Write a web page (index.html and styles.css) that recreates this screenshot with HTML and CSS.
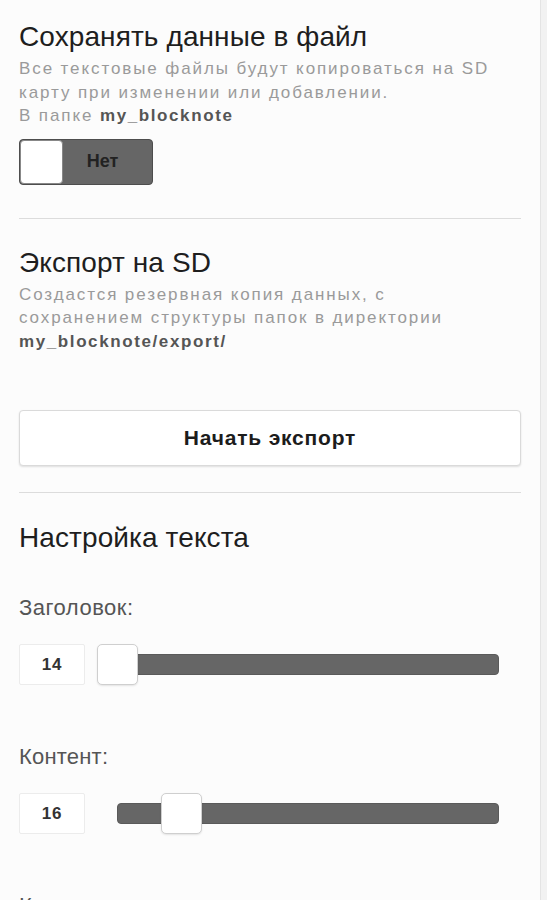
FILE: index.html
```html
<!DOCTYPE html>
<html lang="ru">
<head>
<meta charset="utf-8">
<title>Настройки</title>
<link rel="stylesheet" href="styles.css">
</head>
<body>
<div class="page">
  <section class="section first">
    <h2 class="title">Сохранять данные в файл</h2>
    <p class="desc">Все текстовые файлы будут копироваться на SD<br>карту при изменении или добавлении.<br>В папке <b>my_blocknote</b></p>
    <div class="toggle">
      <span class="knob"></span>
      <span class="toggle-label">Нет</span>
    </div>
  </section>
  <hr class="divider">
  <section class="section second">
    <h2 class="title">Экспорт на SD</h2>
    <p class="desc">Создастся резервная копия данных, с<br>сохранением структуры папок в директории<br><b>my_blocknote/export/</b></p>
    <div class="button">Начать экспорт</div>
  </section>
  <hr class="divider">
  <section class="section third">
    <h2 class="title">Настройка текста</h2>
    <div class="label first-label">Заголовок:</div>
    <div class="slider-row">
      <div class="value">14</div>
      <div class="track"><span class="thumb" style="--pos: 0%"></span></div>
    </div>
    <div class="label">Контент:</div>
    <div class="slider-row">
      <div class="value">16</div>
      <div class="track"><span class="thumb" style="--pos: 16.75%"></span></div>
    </div>
    <div class="label">Кнопки:</div>
  </section>
</div>
</body>
</html>
```

FILE: styles.css
```css
html, body {
  margin: 0;
  padding: 0;
}
body {
  background: #f2f2f2;
  font-family: "Liberation Sans", Arial, sans-serif;
  overflow: hidden;
}
.page {
  width: 541px;
  min-height: 900px;
  background: #fcfcfc;
  border-right: 1px solid #e4e4e4;
  box-sizing: border-box;
  padding: 0 20px 0 19px;
}
.section.first {
  padding-top: 21px;
}
.title {
  margin: 0;
  font-size: 28px;
  line-height: 32px;
  font-weight: normal;
  color: #1e1e1e;
  letter-spacing: 0.1px;
}
.desc {
  margin: 4px 0 0;
  font-size: 17px;
  line-height: 23.5px;
  color: #9a9a9a;
  letter-spacing: 1.9px;
  white-space: nowrap;
}
.desc b {
  color: #555;
  letter-spacing: 1.6px;
}
.toggle {
  margin-top: 11px;
  width: 134px;
  height: 46px;
  box-sizing: border-box;
  background: #666;
  border: 1px solid #4d4d4d;
  border-radius: 4px;
  display: flex;
  overflow: hidden;
}
.knob {
  width: 43px;
  height: 100%;
  background: #fff;
  border-radius: 4px;
  box-sizing: border-box;
  border: 1px solid #888;
}
.toggle-label {
  flex: 1;
  display: flex;
  align-items: center;
  justify-content: center;
  padding-right: 10px;
  font-weight: bold;
  font-size: 18px;
  color: #222;
}
.divider {
  margin: 0;
  border: 0;
  height: 1px;
  background: #dcdcdc;
  width: 502px;
}
.section.first + .divider {
  margin-top: 33px;
}
.section.second {
  padding-top: 28px;
}
.section.second .desc {
  margin-top: 4px;
}
.button {
  margin-top: 57px;
  width: 502px;
  height: 56px;
  box-sizing: border-box;
  background: #fff;
  border: 1px solid #dadada;
  border-radius: 4px;
  box-shadow: 0 1px 2px rgba(0,0,0,0.12);
  display: flex;
  align-items: center;
  justify-content: center;
  font-weight: bold;
  font-size: 21px;
  letter-spacing: 0.8px;
  color: #1c1c1c;
}
.section.second + .divider {
  margin-top: 26px;
}
.section.third {
  padding-top: 29px;
}
.label {
  margin-top: 58px;
  font-size: 22px;
  line-height: 26px;
  color: #555;
  letter-spacing: 0.2px;
}
.label.first-label {
  margin-top: 41px;
  letter-spacing: 0.5px;
}
.slider-row {
  margin-top: 22px;
  display: flex;
  align-items: center;
  height: 43px;
  width: 480px;
}
.value {
  width: 66px;
  height: 41px;
  box-sizing: border-box;
  background: #fff;
  border: 1px solid #ececec;
  border-radius: 2px;
  display: flex;
  align-items: center;
  justify-content: center;
  font-weight: bold;
  font-size: 17px;
  letter-spacing: 0.8px;
  color: #333;
}
.track {
  position: relative;
  margin-left: 32px;
  flex: 1;
  height: 21px;
  box-sizing: border-box;
  background: #666;
  border: 1px solid #5a5a5a;
  border-radius: 4px;
}
.thumb {
  position: absolute;
  top: 50%;
  left: var(--pos);
  width: 41px;
  height: 41px;
  margin: -21px 0 0 -21px;
  box-sizing: border-box;
  background: #fff;
  border: 1px solid #cfcfcf;
  border-radius: 5px;
  box-shadow: 0 1px 2px rgba(0,0,0,0.1);
}
```
